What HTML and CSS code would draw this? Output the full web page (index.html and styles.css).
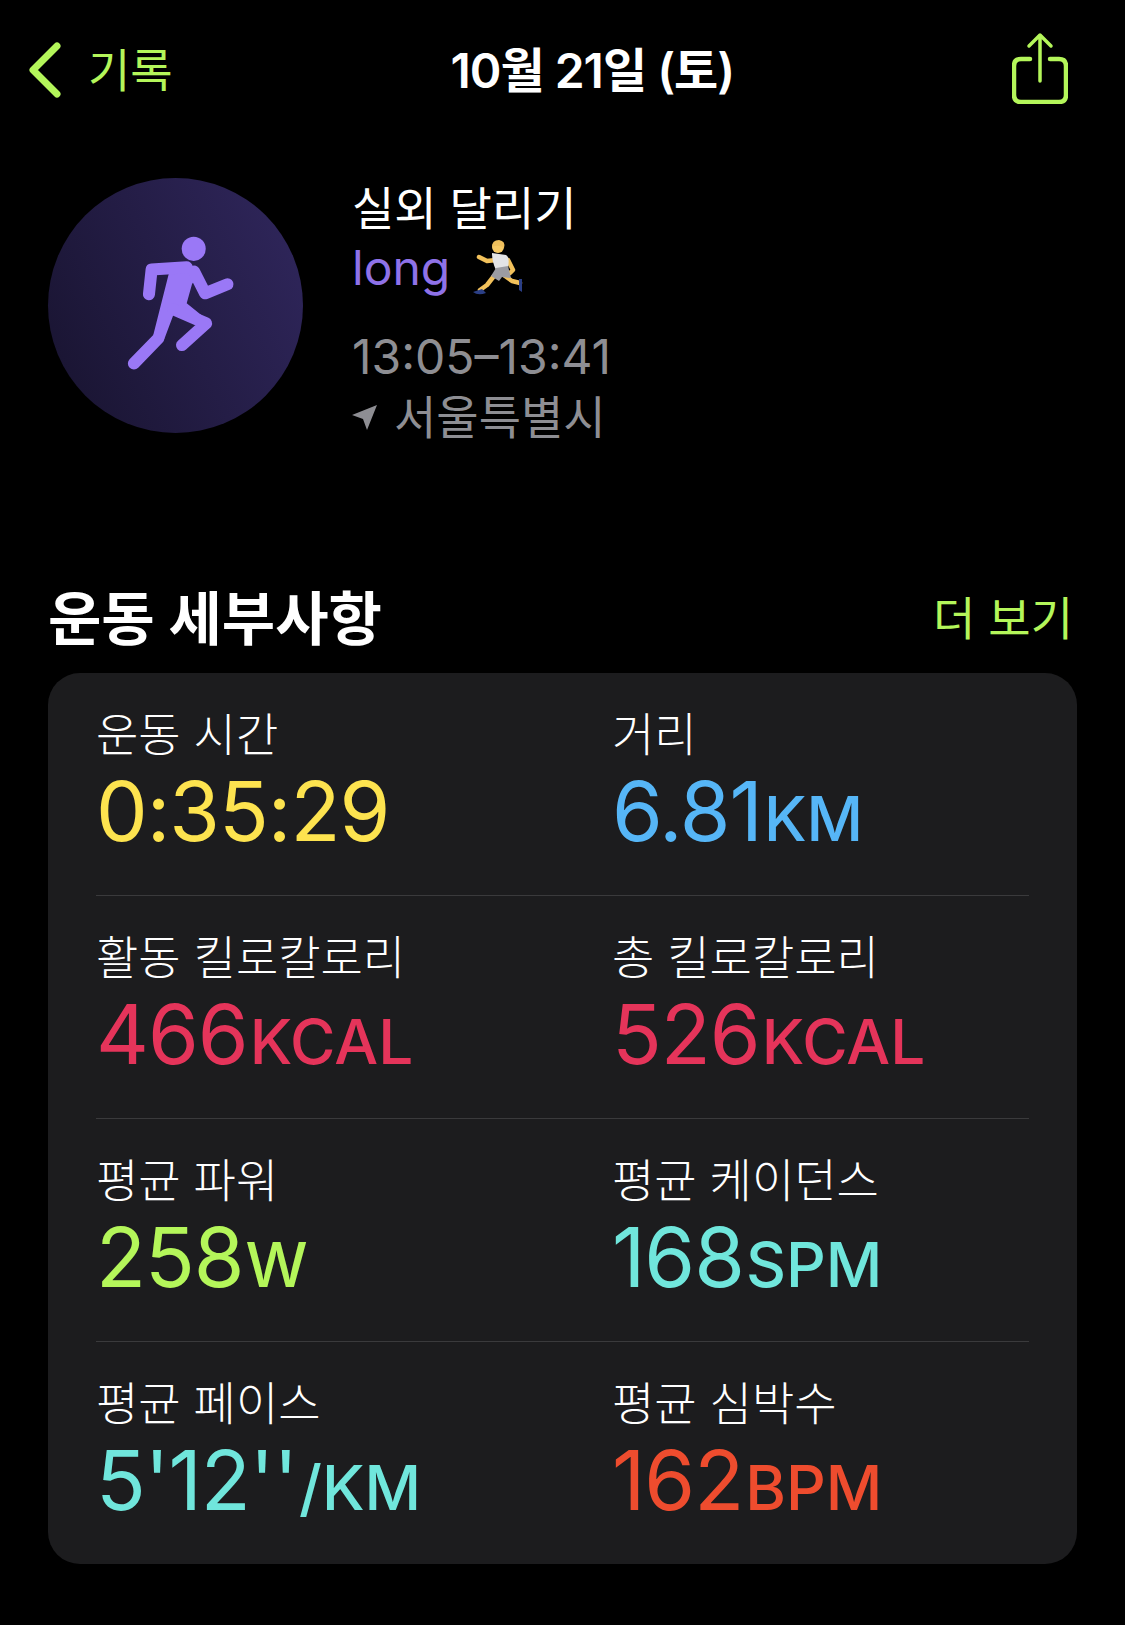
FILE: index.html
```html
<!DOCTYPE html>
<html lang="ko">
<head>
  <meta charset="UTF-8" />
  <meta name="viewport" content="width=device-width, initial-scale=1.0"/>
  <title>운동 세부사항</title>
  <link rel="stylesheet" href="styles.css">
</head>
<body>
  <div class="nav">
    <div class="nav-back">
      <svg class="chevron" viewBox="0 0 33 56"><path d="M29 4 L5 28 L29 52" /></svg>
      <span>기록</span>
    </div>
    <div class="nav-title">10월 21일 (토)</div>
    <svg class="share" viewBox="0 0 56 72">
      <path d="M18 27 H9 Q2 27 2 34 V63 Q2 70 9 70 H47 Q54 70 54 63 V34 Q54 27 47 27 H38" />
      <path class="thin" d="M28 49 V3 M17 14 L28 3 L39 14" />
    </svg>
  </div>

  <div class="summary">
    <div class="badge">
      <svg viewBox="55 55 763 763" class="runner">
        <circle cx="491" cy="267" r="36" />
        <path d="M416 343 L470 322 Q492 322 505 345 L486 372 L470 430 L520 470 L430 465 L402 540 L370 525 Z" />
        <path class="limb" d="M357 403 L365 329 L470 322 M492 335 L525 400 L592 373 M312 610 L385 535 M430 448 L528 490 L456 555" />
      </svg>
    </div>
    <div class="summary-text">
      <div class="sport">실외 달리기</div>
      <div class="name">
        <span>long</span>
        <svg class="emoji" viewBox="0 0 54 56">
          <path class="skin" d="M24 20 L15 21 L7 17 M36 20 L41 30 L38 33" />
          <path class="skin" d="M22 36 L15 45 L8 50 M33 36 L40 41 L48 43" />
          <path class="shirt" d="M20 13 L34 15 Q38 17 36 28 L24 30 Q20 22 20 13 Z" />
          <path class="shorts" d="M24 28 L36 26 L39 38 L30 37 L27 41 L19 36 Z" />
          <path class="shoe" d="M1 52 L10 49 L14 53 Q6 56 1 52 Z M47 39 L50 39 L50 52 L47 50 Z" />
          <circle class="head" cx="26" cy="7" r="6" />
          <path class="hair" d="M20 7 Q20 0 27 0 Q34 1 32 8 Q27 4 20 7 Z" />
        </svg>
      </div>
      <div class="time">13:05–13:41</div>
      <div class="place">
        <svg class="arrow" viewBox="0 0 25 25"><path d="M25 0 L15 25 L11 14 L0 10 Z" /></svg>
        <span>서울특별시</span>
      </div>
    </div>
  </div>

  <div class="section-head">
    <h2>운동 세부사항</h2>
    <span class="more">더 보기</span>
  </div>

  <div class="card">
    <div class="row">
      <div class="stat">
        <div class="label">운동 시간</div>
        <div class="value yellow">0:35:29</div>
      </div>
      <div class="stat">
        <div class="label">거리</div>
        <div class="value blue">6.81<small>KM</small></div>
      </div>
    </div>
    <div class="row">
      <div class="stat">
        <div class="label">활동 킬로칼로리</div>
        <div class="value pink">466<small>KCAL</small></div>
      </div>
      <div class="stat">
        <div class="label">총 킬로칼로리</div>
        <div class="value pink">526<small>KCAL</small></div>
      </div>
    </div>
    <div class="row">
      <div class="stat">
        <div class="label">평균 파워</div>
        <div class="value green">258<small>W</small></div>
      </div>
      <div class="stat">
        <div class="label">평균 케이던스</div>
        <div class="value teal">168<small>SPM</small></div>
      </div>
    </div>
    <div class="row">
      <div class="stat">
        <div class="label">평균 페이스</div>
        <div class="value teal">5'12''<small>/KM</small></div>
      </div>
      <div class="stat">
        <div class="label">평균 심박수</div>
        <div class="value red">162<small>BPM</small></div>
      </div>
    </div>
  </div>
</body>
</html>
```

FILE: styles.css
```css
* {
  margin: 0;
  padding: 0;
  box-sizing: border-box;
}

body {
  background-color: #000000;
  color: #ffffff;
  font-family: Inter, 'Noto Sans CJK KR', sans-serif;
  width: 1125px;
  height: 1625px;
  overflow: hidden;
}

.nav {
  height: 178px;
  padding: 32px 57px 0 28px;
  display: flex;
  justify-content: space-between;
  align-items: flex-start;
}

.nav-back {
  display: flex;
  align-items: center;
  gap: 27px;
  margin-top: 10px;
  color: #b4f65a;
  font-size: 46px;
  line-height: 56px;
}

.chevron {
  width: 33px;
  height: 56px;
  fill: none;
  stroke: #b4f65a;
  stroke-width: 7;
  stroke-linecap: round;
  stroke-linejoin: round;
}

.nav-title {
  font-size: 48px;
  font-weight: 600;
  line-height: 64px;
  margin-top: 7px;
  letter-spacing: -1px;
}

.share {
  width: 56px;
  height: 72px;
  fill: none;
  stroke: #b4f65a;
  stroke-width: 4.5;
  stroke-linecap: round;
  stroke-linejoin: round;
}

.share .thin {
  stroke-width: 3.5;
}

.summary {
  padding-left: 48px;
  display: flex;
  gap: 49px;
  height: 379px;
}

.badge {
  width: 255px;
  height: 255px;
  border-radius: 50%;
  background: linear-gradient(65deg, #1a1533 10%, #2e2559 90%);
}

.runner {
  width: 255px;
  height: 255px;
  fill: #9a78f6;
}

.limb {
  fill: none;
  stroke: #9a78f6;
  stroke-width: 36;
  stroke-linecap: round;
  stroke-linejoin: round;
}

.summary-text {
  padding-top: 0;
  font-size: 46px;
  line-height: 60px;
}

.name {
  display: flex;
  align-items: center;
  gap: 22px;
  color: #8f72e8;
  font-size: 48px;
}

.emoji {
  width: 54px;
  height: 56px;
  fill: none;
  stroke-linecap: round;
  stroke-linejoin: round;
}

.emoji .skin {
  stroke: #f2c15b;
  stroke-width: 4.5;
}

.emoji .shirt {
  fill: #e4e4e6;
}

.emoji .shorts {
  fill: #9c9ca2;
}

.emoji .shoe {
  fill: #2b3f86;
}

.emoji .head {
  fill: #f6c965;
}

.emoji .hair {
  fill: #eebf5c;
}

.time {
  margin-top: 29px;
  color: #8e8e93;
  font-size: 48px;
}

.place {
  display: flex;
  align-items: center;
  gap: 17px;
  color: #8e8e93;
}

.arrow {
  width: 25px;
  height: 25px;
  fill: #8e8e93;
}

.section-head {
  padding: 0 52px 0 48px;
  display: flex;
  justify-content: space-between;
  align-items: center;
  height: 116px;
}

.section-head h2 {
  font-size: 58px;
  font-weight: 700;
}

.more {
  color: #b4f65a;
  font-size: 46px;
}

.card {
  margin: 0 48px;
  width: 1029px;
  height: 891px;
  padding: 0 48px;
  background-color: #1c1c1e;
  border-radius: 32px;
}

.row {
  height: 223px;
  padding-top: 31px;
  display: grid;
  grid-template-columns: 516px 1fr;
  border-bottom: 1px solid #3a3a3c;
}

.row:last-child {
  border-bottom: none;
}

.label {
  font-size: 46px;
  font-weight: 300;
  line-height: 60px;
}

.value {
  font-size: 82px;
  line-height: 96px;
  letter-spacing: -1px;
}

.value small {
  font-size: 62px;
  font-weight: 500;
  letter-spacing: 0;
  margin-left: 2px;
}

.yellow { color: #fde34f; }
.blue { color: #56b6f7; }
.pink { color: #e5345a; }
.green { color: #b4f65a; }
.teal { color: #70e6dc; }
.red { color: #ee4c2e; }
```
